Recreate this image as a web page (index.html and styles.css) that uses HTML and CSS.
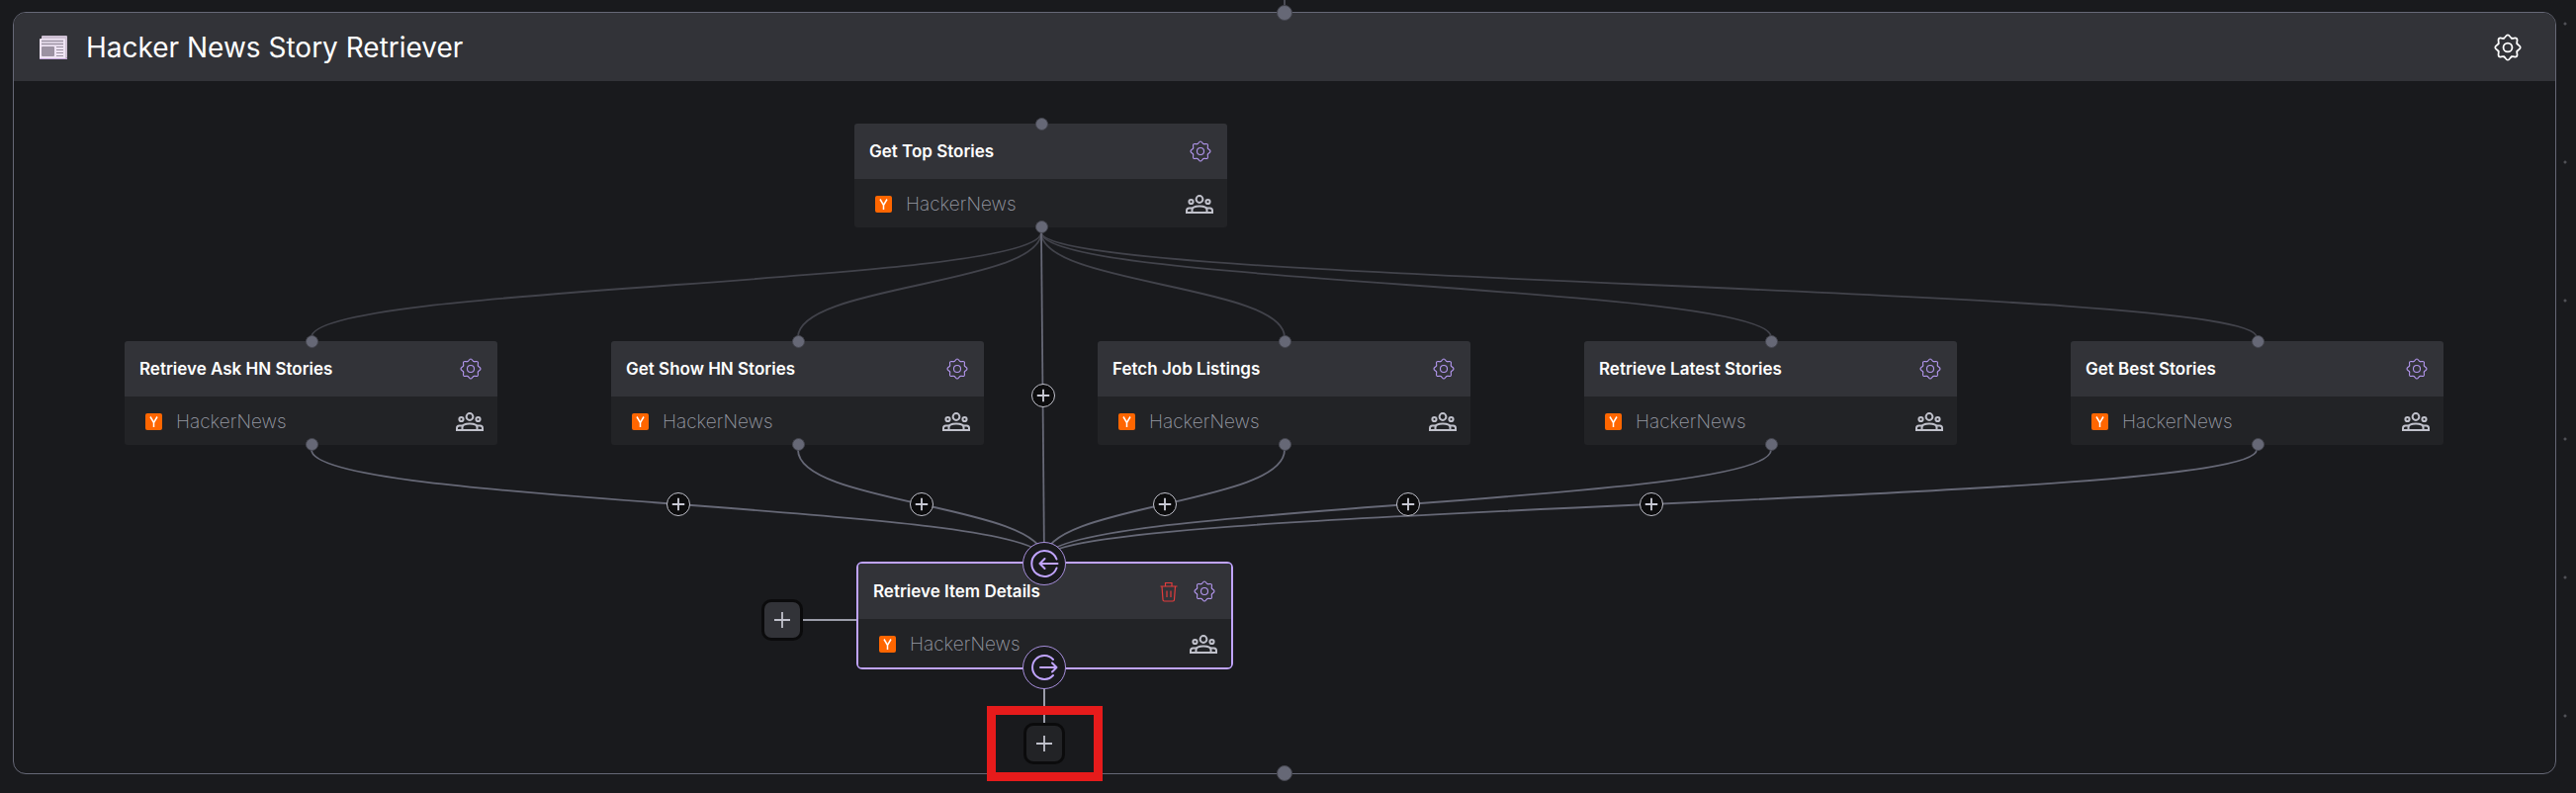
FILE: index.html
```html
<!DOCTYPE html>
<html lang="en">
<head>
<meta charset="utf-8">
<title>Hacker News Story Retriever</title>
<link rel="stylesheet" href="styles.css">
</head>
<body>
<svg class="defs" aria-hidden="true">
  <symbol id="gear" viewBox="-11 -11 22 22">
    <g id="teeth">
      <path id="tooth" d="M-3.06 -7.39C-1.6 -8 -1.6 -10 0 -10S1.6 -8 3.06 -7.39"/>
      <use href="#tooth" transform="rotate(45)"/>
      <use href="#tooth" transform="rotate(90)"/>
      <use href="#tooth" transform="rotate(135)"/>
      <use href="#tooth" transform="rotate(180)"/>
      <use href="#tooth" transform="rotate(225)"/>
      <use href="#tooth" transform="rotate(270)"/>
      <use href="#tooth" transform="rotate(315)"/>
    </g>
    <circle r="3.5"/>
  </symbol>
  <symbol id="people" viewBox="0 0 28 19">
    <circle cx="14" cy="4.5" r="3.4"/>
    <circle cx="5.5" cy="7" r="2.1"/>
    <circle cx="22.5" cy="7" r="2.1"/>
    <path d="M6.5 18v-3c0-2.600 3.500-3.600 7.500-3.600s7.500 1 7.500 3.600v3z"/>
    <path d="M7.500 13.500H3.500C2 13.500 1 14.500 1 16v2h5.500M20.500 13.500h4c1.500 0 2.500 1 2.500 2.500v2h-5.500"/>
  </symbol>
  <symbol id="yc" viewBox="0 0 17 17">
    <rect width="17" height="17" rx="2" fill="#ff6600"/>
    <path d="M5 3.500l3.500 6 3.500-6M8.500 9.500v4.500" fill="none" stroke="#fff" stroke-width="1.500"/>
  </symbol>
  <symbol id="trash" viewBox="0 0 18 21">
    <path d="M.5 5h17M5.500 5V1.500h6.500V5M2 5l1 13.500c0 1 .7 1.500 1.500 1.500h8.500c.9 0 1.500-.5 1.500-1.500l1-13.500M7 9.500v6.500M11 9.500v6.500"/>
  </symbol>
  <symbol id="plus" viewBox="0 0 18 18"><path d="M9 1v16M1 9h16"/></symbol>
</svg>

<main class="group">
  <span class="port port-in"></span>
  <header class="group-head">
    <svg class="news" viewBox="0 0 28 24" aria-hidden="true">
      <rect x="2" y="0" width="26" height="23" rx="1" fill="#cdbfd2"/>
      <rect x="0" y="3" width="26" height="21" rx="1" fill="#eee3f3"/>
      <path d="M0 23.500h28" stroke="#c3a5d8"/>
      <path d="M2 5.500h22M2 8.500h22" stroke="#9c92a2" stroke-width="1.500"/>
      <rect x="2" y="11" width="13" height="10" rx="1" fill="#9c92a2"/>
      <path d="M17 11.500h7M17 14.500h7M17 17.500h7M17 20.500h7" stroke="#9c92a2"/>
    </svg>
    <h1>Hacker News Story Retriever</h1>
    <button class="icon-btn" aria-label="Group settings"><svg class="gear-lg"><use href="#gear"/></svg></button>
  </header>

  <section class="canvas">
    <div class="stage">
      <svg class="edges" width="1" height="1" aria-hidden="true">
        <g class="edge-dim">
          <path d="M-246 153C-246 206 -984 206 -984 259"/>
          <path d="M-246 153C-246 206 -492 206 -492 259"/>
          <path d="M-246 153C-246 206 0 206 0 259"/>
          <path d="M-246 153C-246 206 492 206 492 259"/>
          <path d="M-246 153C-246 206 983 206 983 259"/>
        </g>
        <g class="edge">
          <path d="M-246 153L-243 483"/>
          <path d="M-984 373C-984 428 -243 428 -243 483"/>
          <path d="M-492 373C-492 428 -243 428 -243 483"/>
          <path d="M0 373C0 428 -243 428 -243 483"/>
          <path d="M492 373C492 428 -243 428 -243 483"/>
          <path d="M983 373C983 428 -243 428 -243 483"/>
        </g>
        <path class="link" d="M-487 545H-432M-243 615V650"/>
      </svg>

      <article class="node n-top">
        <div class="node-head"><h2>Get Top Stories</h2><button class="icon-btn" aria-label="Settings"><svg class="gear"><use href="#gear"/></svg></button></div>
        <div class="node-body"><svg class="yc"><use href="#yc"/></svg><span>HackerNews</span><svg class="people"><use href="#people"/></svg></div>
      </article>
      <article class="node n-ask">
        <div class="node-head"><h2>Retrieve Ask HN Stories</h2><button class="icon-btn" aria-label="Settings"><svg class="gear"><use href="#gear"/></svg></button></div>
        <div class="node-body"><svg class="yc"><use href="#yc"/></svg><span>HackerNews</span><svg class="people"><use href="#people"/></svg></div>
      </article>
      <article class="node n-show">
        <div class="node-head"><h2>Get Show HN Stories</h2><button class="icon-btn" aria-label="Settings"><svg class="gear"><use href="#gear"/></svg></button></div>
        <div class="node-body"><svg class="yc"><use href="#yc"/></svg><span>HackerNews</span><svg class="people"><use href="#people"/></svg></div>
      </article>
      <article class="node n-jobs">
        <div class="node-head"><h2>Fetch Job Listings</h2><button class="icon-btn" aria-label="Settings"><svg class="gear"><use href="#gear"/></svg></button></div>
        <div class="node-body"><svg class="yc"><use href="#yc"/></svg><span>HackerNews</span><svg class="people"><use href="#people"/></svg></div>
      </article>
      <article class="node n-latest">
        <div class="node-head"><h2>Retrieve Latest Stories</h2><button class="icon-btn" aria-label="Settings"><svg class="gear"><use href="#gear"/></svg></button></div>
        <div class="node-body"><svg class="yc"><use href="#yc"/></svg><span>HackerNews</span><svg class="people"><use href="#people"/></svg></div>
      </article>
      <article class="node n-best">
        <div class="node-head"><h2>Get Best Stories</h2><button class="icon-btn" aria-label="Settings"><svg class="gear"><use href="#gear"/></svg></button></div>
        <div class="node-body"><svg class="yc"><use href="#yc"/></svg><span>HackerNews</span><svg class="people"><use href="#people"/></svg></div>
      </article>
      <article class="node n-item selected">
        <div class="node-head"><h2>Retrieve Item Details</h2><button class="icon-btn" aria-label="Delete"><svg class="trash"><use href="#trash"/></svg></button><button class="icon-btn" aria-label="Settings"><svg class="gear"><use href="#gear"/></svg></button></div>
        <div class="node-body"><svg class="yc"><use href="#yc"/></svg><span>HackerNews</span><svg class="people"><use href="#people"/></svg></div>
        <button class="knob knob-in" aria-label="Input"><svg viewBox="-15 -15 30 30"><path d="M12.500 -4.500A13 13 0 1 0 12.500 4.500M13.500 0H-4.500M.5 -5L-4.500 0L.5 5"/></svg></button>
        <button class="knob knob-out" aria-label="Output"><svg viewBox="-15 -15 30 30"><path d="M9 -8A12 12 0 1 0 9 8M-4 0H12.500M8 -4.500L12.500 0L8 4.500"/></svg></button>
      </article>

      <button class="badge b-mid" aria-label="Insert step"><svg><use href="#plus"/></svg></button>
      <button class="badge b-1" aria-label="Insert step"><svg><use href="#plus"/></svg></button>
      <button class="badge b-2" aria-label="Insert step"><svg><use href="#plus"/></svg></button>
      <button class="badge b-3" aria-label="Insert step"><svg><use href="#plus"/></svg></button>
      <button class="badge b-4" aria-label="Insert step"><svg><use href="#plus"/></svg></button>
      <button class="badge b-5" aria-label="Insert step"><svg><use href="#plus"/></svg></button>

      <button class="add add-left" aria-label="Add tool"><svg><use href="#plus"/></svg></button>
      <button class="add add-below" aria-label="Add next step"><svg><use href="#plus"/></svg></button>
      <div class="highlight"></div>
    </div>
  </section>
  <span class="port port-out"></span>
</main>
</body>
</html>
```
FILE: styles.css
```css
* { box-sizing: border-box; }

body {
  margin: 0;
  min-height: 100vh;
  padding: 12px 20px 19px 13px;
  display: flex;
  background-color: #191a1d;
  background-image: radial-gradient(circle, #5c5d63 0, #4a4b50 1px, transparent 2px);
  background-size: 140px 140px;
  background-position: 4px -46px;
  font-family: Inter, "Liberation Sans", sans-serif;
  color: #fff;
}

button {
  padding: 0;
  border: 0;
  background: none;
  color: inherit;
  display: grid;
  place-items: center;
  cursor: pointer;
}

svg { display: block; }
.defs { position: absolute; width: 0; height: 0; }

.group {
  position: relative;
  flex: 1;
  display: flex;
  flex-direction: column;
  border: 1px solid #666876;
  border-radius: 13px;
  background: #191a1d;
}

.group-head {
  display: flex;
  align-items: center;
  height: 69px;
  padding: 0 34px 0 26px;
  background: #323338;
  border-radius: 12px 12px 0 0;
}
.group-head h1 {
  flex: 1;
  margin: 0 0 0 19px;
  font-size: 28px;
  line-height: 36px;
  font-weight: 400;
}
.news { width: 28px; height: 24px; }
.gear-lg { width: 28px; height: 28px; fill: none; stroke: #fff; stroke-width: 1.4; stroke-linecap: round; }

.port {
  position: absolute;
  left: 50%;
  width: 16px;
  height: 16px;
  margin-left: -8px;
  border: 1px solid #45464f;
  border-radius: 50%;
  background: #666876;
}
.port-in { top: -8px; }
.port-out { bottom: -8px; }
.port-in::before {
  content: "";
  position: absolute;
  left: 6px;
  bottom: 15px;
  width: 2px;
  height: 6px;
  background: #4b4c55;
}

.canvas { position: relative; flex: 1; min-height: 699px; }
.stage { position: absolute; top: 0; left: 50%; width: 0; }

.edges { position: absolute; left: 0; top: 0; overflow: visible; fill: none; stroke-width: 1.8; }
.edge-dim { stroke: #42434b; }
.edge { stroke: #666876; }
.link { stroke: #9b9da9; stroke-width: 2; }

.node { position: absolute; width: 377px; }
.node::before, .node::after {
  content: "";
  position: absolute;
  left: 50%;
  width: 11px;
  height: 11px;
  margin-left: -6px;
  border: 1px solid #45464f;
  border-radius: 50%;
  background: #666876;
}
.node::before { top: -6px; }
.node::after { bottom: -6px; }

.node-head {
  display: flex;
  align-items: center;
  gap: 16px;
  height: 56px;
  padding: 0 16px 0 15px;
  background: #323338;
  border-radius: 3px 3px 0 0;
}
.node-head h2 {
  flex: 1;
  margin: 0;
  font-size: 17px;
  line-height: 24px;
  font-weight: 600;
  white-space: nowrap;
}
.node-body {
  display: flex;
  align-items: center;
  height: 49px;
  padding: 2px 14px 0 21px;
  background: #222326;
  border-radius: 0 0 3px 3px;
}
.node-body span {
  flex: 1;
  margin-left: 14px;
  font-size: 19px;
  line-height: 24px;
  font-weight: 200;
  color: #989ba5;
}
.yc { width: 17px; height: 17px; }
.people { width: 28px; height: 19px; fill: none; stroke: #c0c1cb; stroke-width: 2; }
.gear { width: 22px; height: 22px; fill: none; stroke: #b498f0; stroke-width: 1.1; stroke-linecap: round; }
.trash { width: 18px; height: 21px; fill: none; stroke: #e23d3d; stroke-width: 1.2; }

.n-top { left: -435px; top: 43px; }
.n-ask { left: -1173px; top: 263px; }
.n-show { left: -681px; top: 263px; }
.n-jobs { left: -189px; top: 263px; }
.n-latest { left: 303px; top: 263px; }
.n-best { left: 795px; top: 263px; }
.n-item { left: -433px; top: 486px; }

.selected { width: 381px; border: 2px solid #c0a4ff; border-radius: 6px; }
.selected::before, .selected::after { display: none; }

.knob {
  position: absolute;
  left: 50%;
  width: 44px;
  height: 44px;
  margin-left: -23px;
  border: 1px solid #a78fdc;
  border-radius: 50%;
  background: #191a1d;
}
.knob svg { width: 30px; height: 30px; fill: none; stroke: #c0a4ff; stroke-width: 2; stroke-linecap: round; stroke-linejoin: round; }
.knob-in { top: -22px; }
.knob-out { bottom: -22px; }

.badge {
  position: absolute;
  width: 24px;
  height: 24px;
  border: 1px solid #c0c1cb;
  border-radius: 50%;
  background: #0c0c0d;
}
.badge svg { width: 14px; height: 14px; stroke: #c8c9d4; stroke-width: 2.4; }
.b-mid { left: -256px; top: 306px; }
.b-1 { left: -625px; top: 416px; }
.b-2 { left: -379px; top: 416px; }
.b-3 { left: -133px; top: 416px; }
.b-4 { left: 113px; top: 416px; }
.b-5 { left: 359px; top: 416px; }

.add {
  position: absolute;
  width: 42px;
  height: 42px;
  border: 3px solid #0b0b0c;
  border-radius: 10px;
}
.add svg { width: 18px; height: 18px; stroke: #c0c1cb; stroke-width: 1.8; }
.add-left { left: -529px; top: 524px; background: #323338; }
.add-below { left: -264px; top: 649px; background: #222326; }

.highlight {
  position: absolute;
  left: -301px;
  top: 632px;
  width: 117px;
  height: 76px;
  border: 9px solid #e61b1b;
  pointer-events: none;
}
```
